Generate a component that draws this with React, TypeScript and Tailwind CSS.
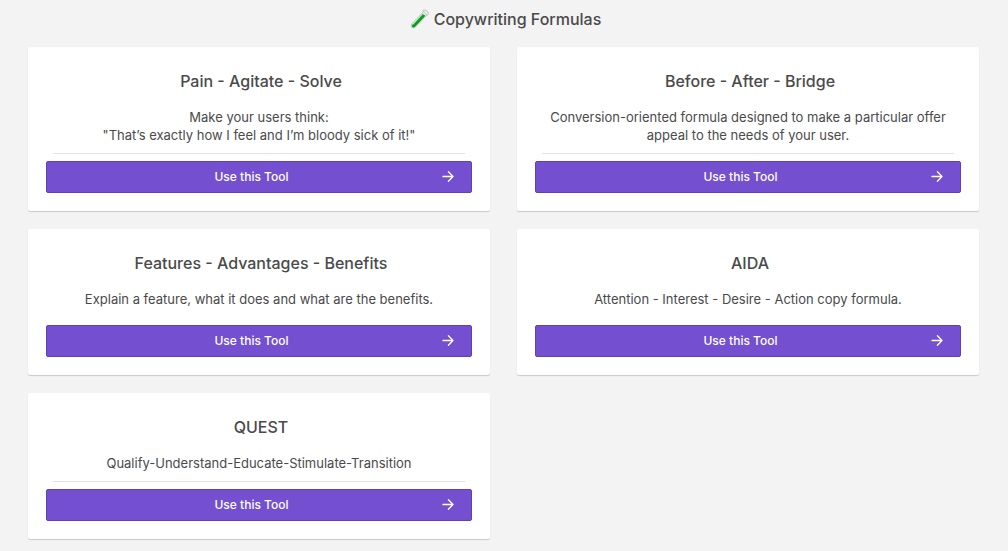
type Formula = {
  title: string;
  lines: string[];
  divider: boolean;
};

const formulas: Formula[] = [
  {
    title: "Pain - Agitate - Solve",
    lines: ["Make your users think:", "\"That’s exactly how I feel and I’m bloody sick of it!\""],
    divider: true,
  },
  {
    title: "Before - After - Bridge",
    lines: ["Conversion-oriented formula designed to make a particular offer appeal to the needs of your user."],
    divider: true,
  },
  {
    title: "Features - Advantages - Benefits",
    lines: ["Explain a feature, what it does and what are the benefits."],
    divider: false,
  },
  {
    title: "AIDA",
    lines: ["Attention - Interest - Desire - Action copy formula."],
    divider: false,
  },
  {
    title: "QUEST",
    lines: ["Qualify-Understand-Educate-Stimulate-Transition"],
    divider: true,
  },
];

function TestTube() {
  return (
    <svg width="20" height="20" viewBox="0 0 20 20" aria-hidden="true">
      <defs>
        <linearGradient id="liquid" x1="0.25" y1="0.25" x2="0.75" y2="0.75">
          <stop offset="0.1" stopColor="#5fd064" />
          <stop offset="0.45" stopColor="#0da522" />
          <stop offset="0.85" stopColor="#04780f" />
        </linearGradient>
      </defs>
      <path d="M13.6 2.4 L17.2 5.8 L5.4 18.2 Q3.6 19.8 1.8 18.4 Q0.4 16.8 1.8 14.8 Z" fill="#e3e9e4" stroke="#a3b0a6" strokeWidth="0.6" />
      <path d="M12 4.6 L15.4 6.8 L5 17.8 Q3.5 19 2.2 18 Q1.1 16.7 2.3 15.2 Z" fill="url(#liquid)" />
      <path d="M2.8 15.2 L12.2 5" stroke="#d9f3da" strokeWidth="1.1" strokeLinecap="round" />
      <path d="M12.6 1.5 Q14.4 0.2 16 1.2 L18.3 3.3 Q19.2 4.8 17.8 6.2 Z" fill="#dcdfdd" stroke="#b4b9b6" strokeWidth="0.6" strokeLinejoin="round" />
      <path d="M14.4 2.2 L17.2 4.8" stroke="#ffffff" strokeWidth="1" />
    </svg>
  );
}

function Arrow() {
  return (
    <svg
      width="12"
      height="12"
      viewBox="0 0 12 12"
      fill="none"
      stroke="currentColor"
      strokeWidth="1.3"
      strokeLinecap="round"
      strokeLinejoin="round"
      aria-hidden="true"
    >
      <path d="M1 5.5H11M6.4 0.8L11 5.5L6.4 10.2" />
    </svg>
  );
}

function FormulaCard({ title, lines, divider }: Formula) {
  return (
    <article className="flex flex-col rounded-xs bg-white px-[18px] pt-[22px] pb-[18px] text-center shadow-[0_1px_1px_rgba(0,0,0,0.18)]">
      <h2 className="pl-1 text-base font-medium">{title}</h2>
      <div className="mt-[15px] px-2 text-[13px] leading-[18px]">
        {lines.map((line) => (
          <p key={line}>{line}</p>
        ))}
      </div>
      <hr className={`mx-[7px] mt-[9px] mb-[7px] ${divider ? "border-[#e2e2e2]" : "border-transparent"}`} />
      <button
        type="button"
        className="flex h-8 items-center rounded-xs border border-[#6041b5] bg-[#7450d0] pr-[17px] text-xs font-medium text-white"
      >
        <span className="flex-1 pl-3.5">Use this Tool</span>
        <Arrow />
      </button>
    </article>
  );
}

export default function App() {
  return (
    <main className="min-h-screen bg-[#f3f3f3] pt-[7px] pr-[29px] pb-3 pl-7 font-['Inter',sans-serif] text-[#4a4a4a]">
      <h1 className="flex items-center justify-center gap-1 pl-1 text-base font-medium">
        <TestTube />
        Copywriting Formulas
      </h1>
      <div className="mt-4 grid grid-cols-2 gap-x-[27px] gap-y-[18px]">
        {formulas.map((formula) => (
          <FormulaCard key={formula.title} {...formula} />
        ))}
      </div>
    </main>
  );
}
